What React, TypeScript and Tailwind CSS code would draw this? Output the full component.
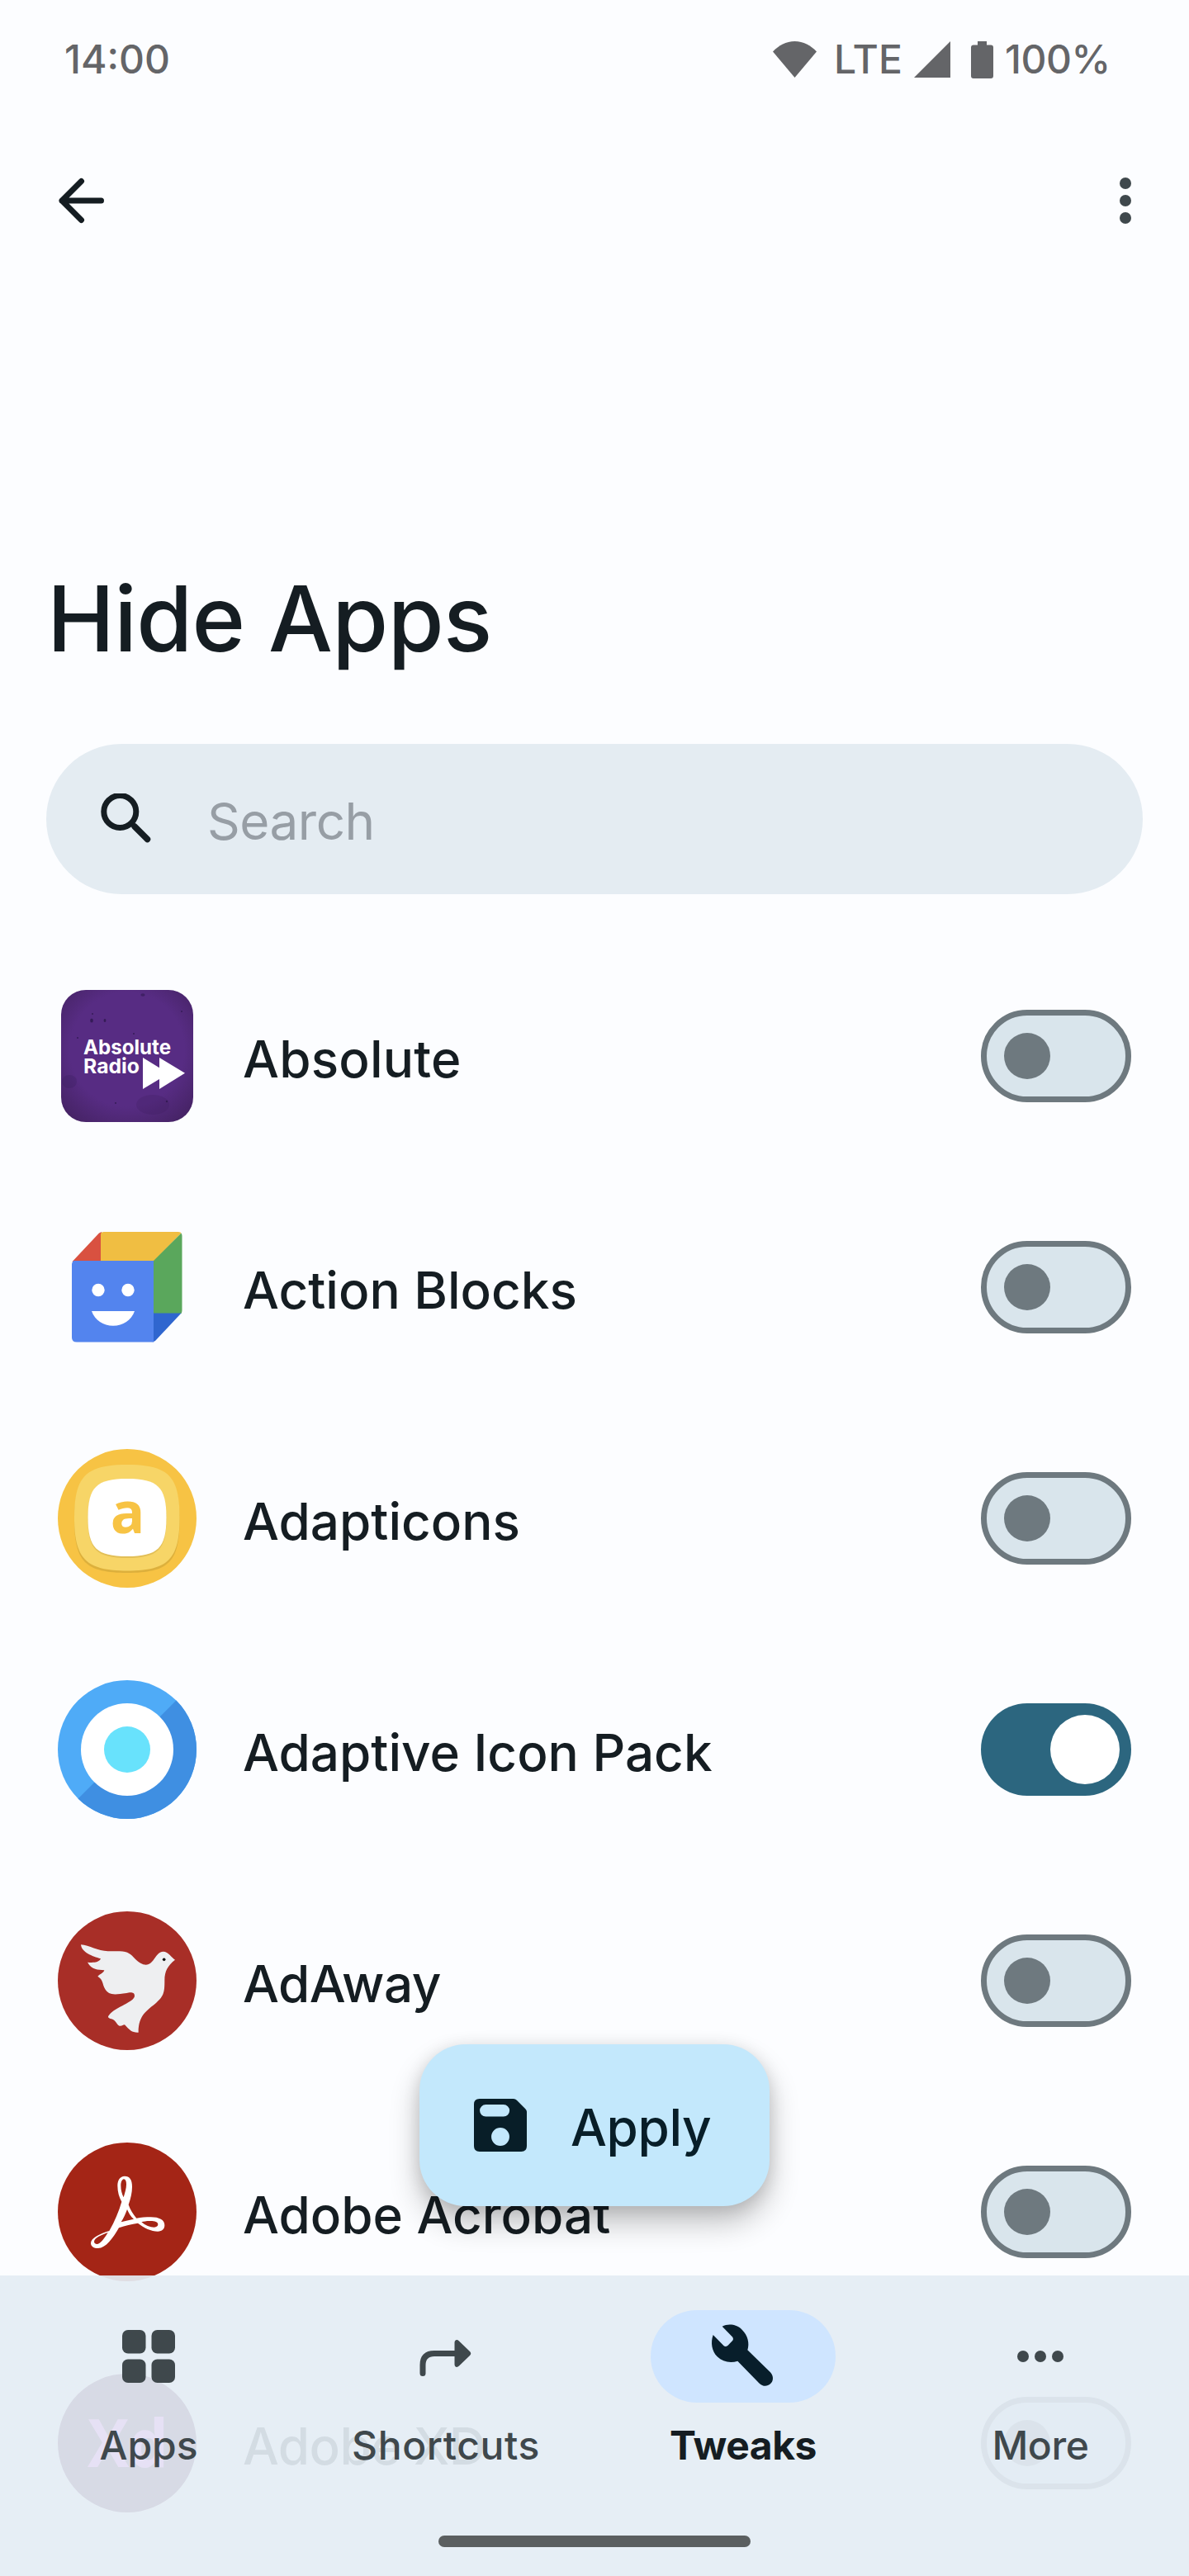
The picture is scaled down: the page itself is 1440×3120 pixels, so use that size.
import type { ReactNode } from 'react';
import clsx from 'clsx';

function AbsoluteIcon() {
  return (
    <svg viewBox="0 0 168 168" className="size-[168px]">
      <defs>
        <radialGradient id="absolute-bg" cx="50%" cy="45%" r="72%">
          <stop offset="0.6" stopColor="#572c83" />
          <stop offset="1" stopColor="#42215f" />
        </radialGradient>
      </defs>
      <rect x="4" y="4" width="160" height="160" rx="30" fill="url(#absolute-bg)" />
      <g fill="#351b57">
        <ellipse cx="41" cy="41" rx="1.8" ry="2.6" />
        <ellipse cx="57" cy="41" rx="1.4" ry="2" />
        <circle cx="42" cy="33" r="1" />
        <ellipse cx="103" cy="10" rx="2.6" ry="1.8" opacity=".7" />
        <circle cx="92" cy="57" r="1" />
        <circle cx="150" cy="30" r="1" />
        <circle cx="24" cy="62" r="1" />
        <circle cx="70" cy="141" r="1" />
        <circle cx="132" cy="139" r="1.2" />
        <ellipse cx="14" cy="115" rx="9" ry="8" opacity=".25" />
        <ellipse cx="115" cy="143" rx="20" ry="12" opacity=".2" />
      </g>
      <g fill="#fff" fontFamily="Inter, sans-serif" fontWeight="700" fontSize="24.5">
        <text x="31" y="81.500" textLength="106" lengthAdjust="spacingAndGlyphs">Absolute</text>
        <text x="31" y="105" textLength="68" lengthAdjust="spacingAndGlyphs">Radio</text>
      </g>
      <path d="M103 86 123 98.200V86l31 18.700L123 124v-12L103 124Z" fill="#fff" />
    </svg>
  );
}

function ActionBlocksIcon() {
  return (
    <svg viewBox="0 0 168 168" className="size-[168px]">
      <path d="M18.500 52 50 18.500 53 17V53H17.500Z" fill="#d95140" />
      <path d="M52 20Q52 17 56 17H146Q149 17 149.500 18.500L116 53H52Z" fill="#f0be42" />
      <path d="M116 52 149.500 18.500Q150.500 20 150.500 22V112Q150.500 114 149.500 116H116Z" fill="#5aa75c" />
      <path d="M115 115.500H149.500L118 149 115 150.500Z" fill="#2f66cf" />
      <path d="M19 52H116V150.500H23Q17 150.500 17 145V56Q17 54 19 52Z" fill="#5384ee" />
      <circle cx="49" cy="87.500" r="7.700" fill="#fff" />
      <circle cx="85" cy="87.500" r="7.700" fill="#fff" />
      <path d="M41 113H93C89 124 79 130.700 67 130.700S45 124 41 113Z" fill="#fff" />
    </svg>
  );
}

function AdapticonsIcon() {
  return (
    <svg viewBox="0 0 168 168" className="size-[168px]">
      <circle cx="84" cy="84" r="84" fill="#f7c344" />
      <path d="M84 22C134 22 147.500 35 147.500 86S134 150 84 150 20 137 20 86 34 22 84 22Z" fill="#ddb03c" />
      <path d="M84 19C134 19 147.500 33 147.500 83S134 147.500 84 147.500 20 133 20 83 34 19 84 19Z" fill="#f7d567" />
      <path d="M84 38C121 38 131.500 48 131.500 85S121 132 84 132 36.500 122 36.500 85 47 38 84 38Z" fill="#e2bf57" />
      <path d="M84 36C121 36 131.500 46 131.500 83S121 130 84 130 36.500 120 36.500 83 47 36 84 36Z" fill="#fff" />
      <text x="84.500" y="102" textAnchor="middle" fontFamily="'Open Sans', sans-serif" fontWeight="700" fontSize="69" fill="#f7c344">a</text>
    </svg>
  );
}

function AdaptivePackIcon() {
  return (
    <svg viewBox="0 0 168 168" className="size-[168px]">
      <circle cx="84" cy="84" r="84" fill="#4fabf7" />
      <path d="M143.397 24.603A84 84 0 0 1 24.603 143.397Z" fill="#3f8fe2" />
      <circle cx="84" cy="84" r="56" fill="#fff" />
      <circle cx="84" cy="84" r="28" fill="#68e2fc" />
    </svg>
  );
}

function AdAwayIcon() {
  return (
    <svg viewBox="90 75 504 504" className="size-[168px]">
      <circle cx="342" cy="327" r="252" fill="#a82e27" />
      <path
        fill="#eeeff1"
        d="M174 196C205 198 235 219 272 220L315 220C345 220 357 232 370 247C385 262 397 269 410 269C440 269 445 221 473 221C492 221 503 243 516 251C490 272 478 292 478 325C478 370 475 382 450 405C415 436 383 450 383 515C360 516 352 508 333 487C325 488 325 492 314 491C303 488 302 470 285 466C273 463 270 459 276 452C300 422 369 405 369 382C369 366 350 370 340 372C290 380 275 378 262 358C250 335 256 325 235 311C245 302 257 298 259 289C235 285 215 290 198 260C215 262 240 262 246 247C215 238 177 225 174 196Z"
      />
      <circle cx="476" cy="250" r="5.500" fill="#111" />
    </svg>
  );
}

function AcrobatIcon() {
  return (
    <svg viewBox="90 915 504 504" className="size-[168px]">
      <circle cx="342" cy="1167" r="252" fill="#a42516" />
      <path
        fill="#fff"
        fillRule="evenodd"
        d="M333 1037C316 1037 307 1052 307 1072C307 1095 313 1115 322 1130C312 1165 297 1200 277 1236C245 1246 210 1262 210 1280C210 1292 221 1299 236 1299C265 1299 290 1263 312 1225C335 1217 358 1211 381 1208C403 1225 430 1238 453 1238C469 1238 478 1229 478 1215C478 1196 458 1186 428 1186C410 1186 392 1187 376 1190C364 1176 353 1160 347 1141C355 1118 360 1097 360 1076C360 1050 351 1037 333 1037ZM330 1048C322 1050 319 1060 319 1072C319 1088 323 1103 329 1114C334 1097 339 1082 339 1067C339 1055 336 1048 330 1048ZM342 1158C347 1170 355 1184 366 1193C350 1196 335 1200 320 1204C329 1190 336 1174 342 1158ZM394 1204C408 1216 425 1223 440 1223C449 1223 454 1218 454 1212C454 1203 440 1199 422 1200C412 1200 402 1202 394 1204ZM272 1242C260 1262 245 1284 232 1284C226 1284 222 1280 222 1275C222 1262 250 1250 272 1242Z"
      />
    </svg>
  );
}

function XdIcon() {
  return (
    <svg viewBox="0 0 168 168" className="size-[168px]">
      <circle cx="84" cy="84" r="84" fill="#470137" />
      <text x="36" y="113" textLength="98" lengthAdjust="spacingAndGlyphs" fontFamily="'Open Sans', sans-serif" fontWeight="700" fontSize="81" fill="#ff61f6">Xd</text>
    </svg>
  );
}

function Switch({ on }: { on?: boolean }) {
  return (
    <div
      role="switch"
      aria-checked={!!on}
      className={clsx(
        'flex h-[112px] w-[182px] shrink-0 items-center rounded-full',
        on ? 'justify-end bg-[#2c667f] pr-[14px]' : 'border-[7px] border-[#6e797f] bg-[#d9e5ec] pl-[21px]',
      )}
    >
      <div className={clsx('rounded-full', on ? 'size-[84px] bg-white' : 'size-[56px] bg-[#6e797f]')} />
    </div>
  );
}

const apps: { name: string; icon: ReactNode; on?: boolean; tracking?: string }[] = [
  { name: 'Absolute', icon: <AbsoluteIcon />, tracking: 'tracking-[0.2px]' },
  { name: 'Action Blocks', icon: <ActionBlocksIcon /> },
  { name: 'Adapticons', icon: <AdapticonsIcon /> },
  { name: 'Adaptive Icon Pack', icon: <AdaptivePackIcon />, on: true },
  { name: 'AdAway', icon: <AdAwayIcon />, tracking: 'tracking-[-0.5px]' },
  { name: 'Adobe Acrobat', icon: <AcrobatIcon /> },
  { name: 'Adobe XD', icon: <XdIcon />, tracking: 'tracking-[-0.6px]' },
];

function AppsGlyph() {
  return (
    <svg viewBox="0 0 64 64" className="size-[64px]" fill="#3f484c">
      <rect width="28.500" height="28.500" rx="7" />
      <rect x="35.500" width="28.500" height="28.500" rx="7" />
      <rect y="35.500" width="28.500" height="28.500" rx="7" />
      <rect x="35.500" y="35.500" width="28.500" height="28.500" rx="7" />
    </svg>
  );
}

function ShortcutsGlyph() {
  return (
    <svg viewBox="0 0 84 84" className="size-[84px]">
      <path d="M14 62.500V52.500Q14 38.500 28 38.500H56" fill="none" stroke="#3f484c" strokeWidth="7" strokeLinecap="round" />
      <path d="M52.500 25.500C52.500 22 55.500 21 58 23.500L71 36Q73.500 38.500 71 41L58 53.500C55.500 56 52.500 55 52.500 51.500Z" fill="#3f484c" />
    </svg>
  );
}

function WrenchGlyph() {
  return (
    <svg viewBox="0 0 300 300" className="size-[100px]">
      <path
        fill="#081e2b"
        d="M74 41C95 31 125 32 146 53C167 74 174 101 166 127L249 208C263 224 259 242 249 250C237 261 220 259 209 248L130 167C103 175 76 170 56 151C36 131 31 100 41 72L80 112Q86 117 94 111L112 92Q116 87 112 80Z"
      />
    </svg>
  );
}

function MoreGlyph() {
  return (
    <svg viewBox="0 0 56 14" className="h-[14px] w-[56px]" fill="#3f484c">
      <circle cx="7" cy="7" r="7" />
      <circle cx="28" cy="7" r="7" />
      <circle cx="49" cy="7" r="7" />
    </svg>
  );
}

const tabs: { label: string; icon: ReactNode; active?: boolean; tracking?: string }[] = [
  { label: 'Apps', icon: <AppsGlyph /> },
  { label: 'Shortcuts', icon: <ShortcutsGlyph />, tracking: 'tracking-[0.6px]' },
  { label: 'Tweaks', icon: <WrenchGlyph />, active: true, tracking: 'tracking-[-0.5px]' },
  { label: 'More', icon: <MoreGlyph />, tracking: 'tracking-[-0.4px]' },
];

function StatusBar() {
  return (
    <div className="flex h-[144px] items-center pl-[78px] text-[48px] leading-[60px] font-medium text-[#646568]">
      <span className="w-[858px]">14:00</span>
      <svg viewBox="0 0 53 44" className="h-[44px] w-[53px]" fill="currentColor">
        <path d="M26.500 44 0 12.500C7 5 16 0 26.500 0S46 5 53 12.500Z" />
      </svg>
      <span className="ml-[21px] w-[97px]">LTE</span>
      <svg viewBox="0 0 44 44" className="h-[44px] w-[44px]" fill="currentColor">
        <path d="M44 0V44H0Z" />
      </svg>
      <svg viewBox="0 0 27 45" className="ml-[25px] h-[45px] w-[27px]" fill="currentColor">
        <path d="M8 0H19V4.500H24Q27 4.500 27 7.500V42Q27 45 24 45H3Q0 45 0 42V7.500Q0 4.500 3 4.500H8Z" />
      </svg>
      <span className="ml-[14px] tracking-[-0.5px]">100%</span>
    </div>
  );
}

export default function App() {
  return (
    <div className="relative h-[3120px] w-[1440px] overflow-hidden bg-[#fcfdff] font-['Inter',sans-serif] text-[#151d22]">
      <StatusBar />

      <header className="flex h-[198px] items-center justify-between px-[70px]">
        <svg viewBox="0 0 56 56" className="size-[56px]" fill="none" stroke="#151d22" strokeWidth="7" strokeLinecap="round" strokeLinejoin="round">
          <path d="M28.500 4.500 5 28 28.500 51.500M5 28H52.500" />
        </svg>
        <svg viewBox="0 0 14 56" className="h-[56px] w-[14px]" fill="#3f484c">
          <circle cx="7" cy="7" r="7" />
          <circle cx="7" cy="28" r="7" />
          <circle cx="7" cy="49" r="7" />
        </svg>
      </header>

      <h1 className="mt-[351px] pl-[57px] text-[110px] leading-[112px] font-medium tracking-[-0.7px]">Hide Apps</h1>

      <div className="mx-[56px] mt-[96px] flex h-[182px] items-center rounded-full bg-[#e4ecf2] pl-[66px]">
        <svg viewBox="0 0 62 62" className="size-[62px]" fill="none" stroke="#151d22">
          <circle cx="23.300" cy="22" r="19.500" strokeWidth="7" />
          <path d="M41 40 56.500 55.500" strokeWidth="7.500" strokeLinecap="round" />
        </svg>
        <span className="ml-[67px] pt-[5px] text-[62px] leading-[80px] tracking-[-0.5px] text-[#979ea5]">Search</span>
      </div>

      <ul className="mt-[56px]">
        {apps.map((app) => (
          <li key={app.name} className="flex h-[280px] items-center px-[70px]">
            {app.icon}
            <span className={clsx('ml-[56px] flex-1 pt-[7px] text-[62px] leading-[80px] font-medium whitespace-nowrap', app.tracking)}>
              {app.name}
            </span>
            <Switch on={app.on} />
          </li>
        ))}
      </ul>

      <button className="absolute top-[2476px] left-[508px] flex h-[196px] w-[424px] items-center rounded-[56px] bg-[#c3e8fc] pl-[66px] text-[#081e28] shadow-[0_20px_36px_rgba(0,0,0,0.24),0_4px_20px_rgba(0,0,0,0.12)]">
        <svg viewBox="283 307 190 190" className="size-[64px]">
          <path
            fill="currentColor"
            fillRule="evenodd"
            d="M303 307H425Q432 307 437 312L468 343Q473 348 473 354V477Q473 497 453 497H303Q283 497 283 477V327Q283 307 303 307ZM325.500 328A21.500 21.500 0 0 0 325.500 371H389.500A21.500 21.500 0 0 0 389.500 328ZM378 411A32.500 32.500 0 1 0 378 476A32.500 32.500 0 1 0 378 411Z"
          />
        </svg>
        <span className="ml-[53px] pt-[5px] text-[62px] leading-[80px] font-medium tracking-[-0.4px]">Apply</span>
      </button>

      <nav className="absolute inset-x-0 bottom-0 flex h-[364px] flex-col items-center bg-[#e4edf4]/92">
        <div className="grid w-full grid-cols-4 pt-[42px]">
          {tabs.map((tab) => (
            <div key={tab.label} className="flex flex-col items-center">
              <div className={clsx('flex h-[112px] w-[224px] items-center justify-center rounded-full', tab.active && 'bg-[#cfe5ff]')}>
                {tab.icon}
              </div>
              <span
                className={clsx(
                  'mt-[20px] text-[48px] leading-[64px]',
                  tab.active ? 'font-bold text-[#151d22]' : 'font-medium text-[#3f484c]',
                  tab.tracking,
                )}
              >
                {tab.label}
              </span>
            </div>
          ))}
        </div>
        <div className="mt-[77px] h-[14px] w-[378px] rounded-full bg-[#5b5f60]" />
      </nav>
    </div>
  );
}
